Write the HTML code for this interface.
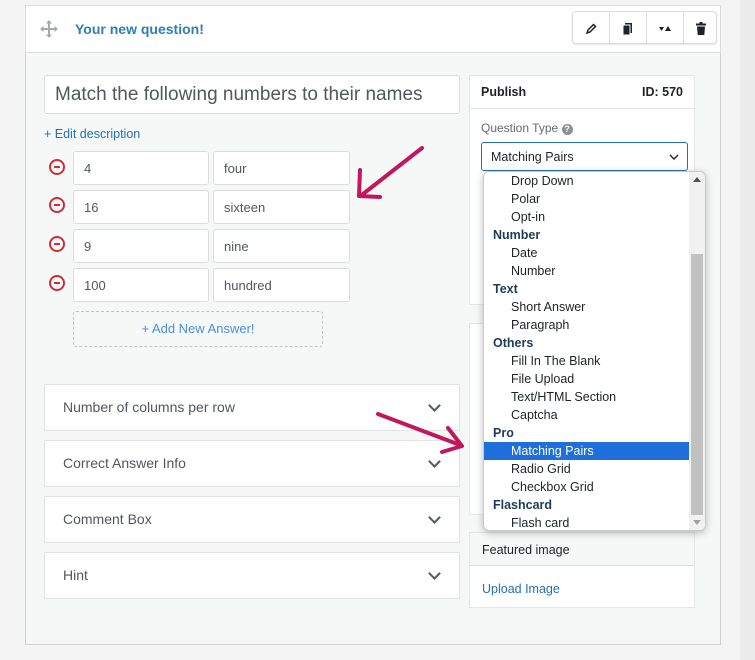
<!DOCTYPE html>
<html><head><meta charset="utf-8"><style>
*{box-sizing:border-box;margin:0;padding:0}
body{width:755px;height:660px;background:#f4f4f4;font-family:"Liberation Sans",sans-serif;position:relative;overflow:hidden;color:#3c434a}
.abs{position:absolute}
.card{left:25px;top:5px;width:696px;height:640px;background:#f6f7f7;border:1px solid #d0d0d0}
.head{left:25px;top:5px;width:696px;height:48px;background:#fff;border:1px solid #dcdcde}
.inp{position:absolute;background:#fff;border:1px solid #dcdcde;border-radius:3px;font-size:13px;color:#50575e;padding-left:10px;display:flex;align-items:center}
.minus{position:absolute;width:16px;height:16px;border:2px solid #c9303a;border-radius:50%}
.minus:after{content:"";position:absolute;left:3px;top:5px;width:6px;height:2px;background:#c9303a}
.acc{position:absolute;left:44px;width:416px;height:47px;background:#fff;border:1px solid #e2e2e2;font-size:14px;color:#50575e;padding-left:18px;line-height:45px}
.chev{position:absolute;right:20px;top:16px;width:9px;height:9px;border-right:2px solid #50575e;border-bottom:2px solid #50575e;transform:rotate(45deg)}
.box{position:absolute;left:469px;width:226px;background:#fff;border:1px solid #e5e5e5}
.dd{left:483px;top:171px;width:223px;height:360px;background:#fff;border:1px solid #c8c8c8;border-radius:6px;box-shadow:0 2px 8px rgba(0,0,0,.25);overflow:hidden;font-size:12.5px;color:#1d2327}
.dd div{height:18px;line-height:18px;padding-left:27px;width:206px}
.dd .g{font-weight:bold;padding-left:9px;color:#1d3c5a}
.dd .sel{background:#1e6fd9;color:#fff}
.tb{position:absolute;top:12px;width:37px;height:33px;border-right:1px solid #dcdcde;display:flex;align-items:center;justify-content:center}
</style></head><body>
<div class="abs" style="left:740px;top:0;width:15px;height:660px;background:#ececec"></div>
<div class="abs card"></div>
<div class="abs head"></div>
<svg class="abs" style="left:39px;top:19px" width="20" height="20" viewBox="0 0 20 20"><path d="M10 1 L13 4.5 H11 V9 H15.5 V7 L19 10 L15.5 13 V11 H11 V15.5 H13 L10 19 L7 15.5 H9 V11 H4.5 V13 L1 10 L4.5 7 V9 H9 V4.5 H7 Z" fill="#a7aaad"/></svg>
<div class="abs" style="left:75px;top:21px;font-size:14px;color:#2f7fb5;font-weight:600">Your new question!</div>
<div class="abs" style="left:572px;top:11px;width:145px;height:33px;background:#fff;border:1px solid #dcdcde;border-radius:4px;box-shadow:0 1px 2px rgba(0,0,0,.1)">
<div class="tb" style="left:0;top:0"><svg width="12" height="12" viewBox="0 0 12 12"><path d="M2 10 L3 7 L8.5 1.5 L10.5 3.5 L5 9 Z" fill="none" stroke="#1d2327" stroke-width="1.5"/></svg></div>
<div class="tb" style="left:37px;top:0"><svg width="12" height="14" viewBox="0 0 12 14"><rect x="3" y="1" width="7" height="10" fill="#1d2327"/><rect x="1" y="3" width="7" height="10" fill="#1d2327" stroke="#fff"/></svg></div>
<div class="tb" style="left:74px;top:0"><svg width="14" height="10" viewBox="0 0 14 10"><path d="M1 3 H6 L3.5 7Z M7 7 H13 L10 2Z" fill="#1d2327"/></svg></div>
<div class="tb" style="left:109px;top:0;border:0"><svg width="10" height="13" viewBox="0 0 10 13"><rect x="0" y="1.5" width="10" height="2" fill="#1d2327"/><rect x="3.5" y="0" width="3" height="2" fill="#1d2327"/><path d="M1 4.5 H9 L8.3 13 H1.7Z" fill="#1d2327"/></svg></div>
</div>

<div class="inp" style="left:44px;top:75px;width:416px;height:39px;font-size:19px;color:#50575e;padding-left:10px">Match the following numbers to their names</div>
<div class="abs" style="left:44px;top:127px;font-size:12.5px;color:#2271b1">+ Edit description</div>

<div class="minus" style="left:49px;top:159px"></div>
<div class="inp" style="left:73px;top:151px;width:136px;height:34px">4</div>
<div class="inp" style="left:213px;top:151px;width:137px;height:34px">four</div>
<div class="minus" style="left:49px;top:197px"></div>
<div class="inp" style="left:73px;top:190px;width:136px;height:34px">16</div>
<div class="inp" style="left:213px;top:190px;width:137px;height:34px">sixteen</div>
<div class="minus" style="left:49px;top:236px"></div>
<div class="inp" style="left:73px;top:229px;width:136px;height:34px">9</div>
<div class="inp" style="left:213px;top:229px;width:137px;height:34px">nine</div>
<div class="minus" style="left:49px;top:275px"></div>
<div class="inp" style="left:73px;top:268px;width:136px;height:34px">100</div>
<div class="inp" style="left:213px;top:268px;width:137px;height:34px">hundred</div>
<div class="abs" style="left:73px;top:311px;width:250px;height:36px;border:1px dashed #c3c4c7;border-radius:3px;text-align:center;line-height:34px;font-size:13px;color:#4a90d9">+ Add New Answer!</div>

<div class="acc" style="top:384px">Number of columns per row<span class="chev"></span></div>
<div class="acc" style="top:440px">Correct Answer Info<span class="chev"></span></div>
<div class="acc" style="top:496px">Comment Box<span class="chev"></span></div>
<div class="acc" style="top:552px">Hint<span class="chev"></span></div>

<div class="box" style="top:75px;height:230px">
<div style="height:33px;border-bottom:1px solid #e5e5e5;font-size:12.5px;font-weight:bold;color:#1d2327;padding:9px 11px;display:flex;justify-content:space-between"><span>Publish</span><span>ID: 570</span></div>
<div style="position:absolute;left:11px;top:45px;font-size:12px;color:#646970">Question Type <span style="display:inline-block;width:11px;height:11px;border-radius:50%;background:#8c8f94;color:#fff;font-size:9px;text-align:center;line-height:11px;font-weight:bold">?</span></div>
<div style="position:absolute;left:11px;top:66px;width:207px;height:29px;border:1px solid #2271b1;border-radius:3px;font-size:12.5px;color:#1d2327;padding:7px 0 0 9px">Matching Pairs<svg style="position:absolute;right:8px;top:11px" width="10" height="7" viewBox="0 0 10 7"><path d="M1 1 L5 5 L9 1" fill="none" stroke="#1d2327" stroke-width="1.4"/></svg></div>
</div>
<div class="box" style="top:323px;height:192px"></div>
<div class="box" style="top:532px;height:76px">
<div style="height:33px;border-bottom:1px solid #dcdcde;background:#f6f7f7;font-size:12.5px;color:#1d2327;padding:10px 12px">Featured image</div>
<div style="padding:16px 12px;font-size:12.5px;color:#2271b1">Upload Image</div>
</div>

<div class="abs dd">
<div>Drop Down</div><div>Polar</div><div>Opt-in</div>
<div class="g">Number</div><div>Date</div><div>Number</div>
<div class="g">Text</div><div>Short Answer</div><div>Paragraph</div>
<div class="g">Others</div><div>Fill In The Blank</div><div>File Upload</div><div>Text/HTML Section</div><div>Captcha</div>
<div class="g">Pro</div><div class="sel">Matching Pairs</div><div>Radio Grid</div><div>Checkbox Grid</div>
<div class="g">Flashcard</div><div>Flash card</div>
<span style="position:absolute;right:0;top:0;width:16px;height:358px;background:#f1f1f1"></span>
<span style="position:absolute;right:2px;top:82px;width:12px;height:261px;background:#c1c1c1"></span>
<span style="position:absolute;right:4px;top:5px;border:4px solid transparent;border-bottom:5px solid #505050;border-top:0"></span>
<span style="position:absolute;right:4px;bottom:5px;border:4px solid transparent;border-top:5px solid #a0a0a0;border-bottom:0"></span>
</div>

<svg class="abs" style="left:0;top:0" width="755" height="660">
<g stroke="#c2185b" stroke-width="4" stroke-linecap="round" fill="none" stroke-linejoin="round">
<path d="M422 148 L363 194"/><path d="M360 170 L359 196 L380 197"/>
<path d="M378 414 L460 445"/><path d="M448 428 L462 446 L442 452"/>
</g></svg>
</body></html>
